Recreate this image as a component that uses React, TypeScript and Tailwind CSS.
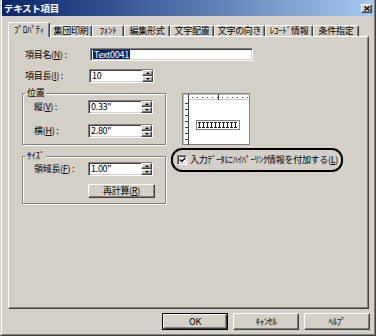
import React from "react";

const raised =
  "border border-t-white border-l-white border-r-[#404040] border-b-[#404040] shadow-[inset_-1px_-1px_0_#808080] bg-[#d4d0c8]";
const sunken =
  "border border-t-[#808080] border-l-[#808080] border-r-white border-b-white shadow-[inset_1px_1px_0_#404040,inset_-1px_-1px_0_#d4d0c8] bg-white";
const etched = "border border-[#808080] shadow-[inset_1px_1px_0_#ffffff,1px_1px_0_#ffffff]";

function Arrow({ up }: { up?: boolean }) {
  return up ? (
    <div className="w-0 h-0 border-x-[2px] border-x-transparent border-b-[2px] border-b-black" />
  ) : (
    <div className="w-0 h-0 border-x-[2px] border-x-transparent border-t-[2px] border-t-black" />
  );
}

function Spin({ value }: { value: string }) {
  return (
    <div className={`flex w-[65px] h-[14px] ${sunken}`}>
      <div className="flex-1 pl-[2px] leading-[12px]">{value}</div>
      <div className="flex flex-col w-[11px] h-[12px]">
        <div className={`flex-1 flex items-center justify-center ${raised}`}>
          <Arrow up />
        </div>
        <div className={`flex-1 flex items-center justify-center ${raised}`}>
          <Arrow />
        </div>
      </div>
    </div>
  );
}

function Tab({ label, w, active }: { label: string; w: number; active?: boolean }) {
  const widths: Record<number, string> = {
    42: "w-[42px]",
    32: "w-[32px]",
    46: "w-[46px]",
    44: "w-[44px]",
    51: "w-[51px]",
    48: "w-[48px]",
  };
  return active ? (
    <div
      className={`${widths[w]} h-[15px] -mb-[1px] relative z-10 bg-[#d4d0c8] border-t border-l border-t-white border-l-white border-r border-r-[#404040] shadow-[inset_-1px_0_0_#808080] rounded-tl-[2px] rounded-tr-[2px] flex items-start justify-center pt-[1px] leading-[11px]`}
    >
      {label}
    </div>
  ) : (
    <div
      className={`${widths[w]} h-[11px] bg-[#d4d0c8] border-t border-l border-t-white border-l-white border-r border-r-[#404040] shadow-[inset_-1px_0_0_#808080] rounded-tl-[2px] rounded-tr-[2px] flex items-center justify-center leading-[10px]`}
    >
      {label}
    </div>
  );
}

function Preview() {
  const topTicks = [];
  for (let x = 10; x < 66; x += 5) {
    topTicks.push(<rect key={x} x={x} y={4} width={1} height={1} fill="#404040" />);
  }
  const leftTicks = [];
  for (let y = 10; y < 50; y += 6) {
    leftTicks.push(<rect key={y} x={3} y={y} width={3} height={1} fill="#404040" />);
  }
  const Is = [];
  for (let i = 0; i < 10; i++) {
    const x0 = 16 + i * 4;
    Is.push(
      <g key={i} fill="#202020">
        <rect x={x0} y={29} width={3} height={1} />
        <rect x={x0} y={34} width={3} height={1} />
        <rect x={x0 + 1} y={29} width={1} height={6} />
      </g>
    );
  }
  return (
    <svg width="68" height="52" viewBox="0 0 68 52" className="block">
      <rect x="0" y="0" width="68" height="52" fill="#ffffff" />
      <rect x="0.5" y="0.5" width="67" height="51" fill="none" stroke="#808080" />
      <line x1="1" y1="1.5" x2="67" y2="1.5" stroke="#c0c0c0" />
      <line x1="1.5" y1="1" x2="1.5" y2="51" stroke="#c0c0c0" />
      <line x1="6" y1="6.5" x2="67" y2="6.5" stroke="#c8c8c8" />
      {topTicks}
      <rect x="36" y="1" width="1" height="6" fill="#404040" />
      <rect x="6" y="1" width="1" height="51" fill="#404040" />
      {leftTicks}
      <rect x="14.5" y="27.5" width="43" height="9" fill="#ffffff" stroke="#808080" />
      {Is}
    </svg>
  );
}

export default function App() {
  return (
    <div className="w-[376px] h-[336px] bg-[#d4d0c8] border-l border-l-[#d4d0c8] border-r border-r-[#404040] border-b border-b-[#404040] font-[family-name:'Noto_Sans_CJK_JP','Noto_Sans',sans-serif] text-[9px] tracking-[-0.3px] text-black overflow-hidden">
      <div className="h-full border-l border-l-white border-r border-r-[#808080] border-b border-b-[#808080] flex flex-col">
        {/* title bar */}
        <div className="h-[16px] bg-linear-to-r from-[#0a246a] to-[#a6caf0] flex items-center justify-between pl-[2px] pr-[2px]">
          <span className="text-white font-bold text-[9.5px] leading-[14px]">テキスト項目</span>
          <div className={`w-[11px] h-[9px] flex items-center justify-center ${raised}`}>
            <svg width="6" height="5" viewBox="0 0 6 5">
              <path d="M0.5 0.5 L5.5 4.5 M5.5 0.5 L0.5 4.5" stroke="#000" strokeWidth="1.3" />
            </svg>
          </div>
        </div>

        {/* tabs */}
        <div className="mt-[6px] ml-[6px] h-[14px] flex items-end">
          <Tab label="ﾌﾟﾛﾊﾟﾃｨ" w={42} active />
          <Tab label="集団印刷" w={42} />
          <Tab label="ﾌｫﾝﾄ" w={32} />
          <Tab label="編集形式" w={46} />
          <Tab label="文字配置" w={44} />
          <Tab label="文字の向き" w={51} />
          <Tab label="ﾚｺｰﾄﾞ情報" w={48} />
          <Tab label="条件指定" w={46} />
        </div>

        {/* panel */}
        <div className="ml-[6px] w-[361px] h-[273px] border-t border-l border-t-white border-l-white border-r border-b border-r-[#404040] border-b-[#404040] shadow-[inset_-1px_-1px_0_#808080] flex flex-col">
          <div className="mt-[11px] ml-[16px] flex items-center h-[13px]">
            <div className="w-[65px] leading-[12px]">
              項目名(<span className="underline">N</span>) :
            </div>
            <div className={`w-[163px] h-[13px] flex items-center ${sunken} pl-[2px]`}>
              <span className="bg-[#0a246a] text-white leading-[9px] px-[1px]">Text0041</span>
            </div>
          </div>
          <div className="mt-[8px] ml-[16px] flex items-center h-[14px]">
            <div className="w-[64px] leading-[12px]">
              項目長(<span className="underline">I</span>) :
            </div>
            <Spin value="10" />
          </div>

          <div className="flex ml-[13px]">
            {/* left column */}
            <div className="w-[144px] flex flex-col">
              <div className={`relative mt-[10px] ${etched} pt-[6px] pb-[6px] pl-[11px]`}>
                <span className="absolute left-[2px] -top-[7px] px-[2px] bg-[#d4d0c8] leading-[12px]">位置</span>
                <div className="flex items-center h-[14px]">
                  <div className="w-[54px] leading-[12px]">
                    縦(<span className="underline">V</span>) :
                  </div>
                  <Spin value={'0.33"'} />
                </div>
                <div className="flex items-center h-[14px] mt-[10px]">
                  <div className="w-[54px] leading-[12px]">
                    横(<span className="underline">H</span>) :
                  </div>
                  <Spin value={'2.80"'} />
                </div>
              </div>

              <div className={`relative mt-[11px] ${etched} pt-[5px] pb-[5px] pl-[11px]`}>
                <span className="absolute left-[2px] -top-[7px] px-[2px] bg-[#d4d0c8] leading-[12px]">ｻｲｽﾞ</span>
                <div className="flex items-center h-[14px]">
                  <div className="w-[54px] leading-[12px]">
                    領域長(<span className="underline">F</span>) :
                  </div>
                  <Spin value={'1.00"'} />
                </div>
                <div className="flex mt-[8px]">
                  <div className="w-[54px]" />
                  <div className={`w-[67px] h-[14px] flex items-center justify-center leading-[12px] ${raised}`}>
                    再計算(<span className="underline">R</span>)
                  </div>
                </div>
              </div>
            </div>

            {/* right column */}
            <div className="ml-[5px] flex flex-col">
              <div className="mt-[10px] ml-[11px]">
                <Preview />
              </div>
              <div className="mt-[3px] w-[172px] h-[24px] border-2 border-black rounded-[11px] flex items-center pl-[4px]">
                <div className={`w-[10px] h-[10px] flex items-center justify-center ${sunken}`}>
                  <svg width="7" height="6" viewBox="0 0 7 6">
                    <path d="M0.8 2.6 L2.7 4.6 L6.3 0.9" fill="none" stroke="#000" strokeWidth="1.4" />
                  </svg>
                </div>
                <span className="ml-[3px] leading-[12px] whitespace-nowrap">
                  入力ﾃﾞｰﾀにﾊｲﾊﾟｰﾘﾝｸ情報を付加する(<span className="underline">L</span>)
                </span>
              </div>
            </div>
          </div>
        </div>

        {/* buttons */}
        <div className="mt-[4px] flex justify-end gap-[5px] pr-[4px]">
          <div className="w-[66px] h-[17px] border border-black">
            <div className={`w-full h-full flex items-center justify-center leading-[12px] ${raised}`}>OK</div>
          </div>
          <div className={`w-[66px] h-[17px] flex items-center justify-center leading-[12px] ${raised}`}>ｷｬﾝｾﾙ</div>
          <div className={`w-[66px] h-[17px] flex items-center justify-center leading-[12px] ${raised}`}>ﾍﾙﾌﾟ</div>
        </div>
      </div>
    </div>
  );
}
